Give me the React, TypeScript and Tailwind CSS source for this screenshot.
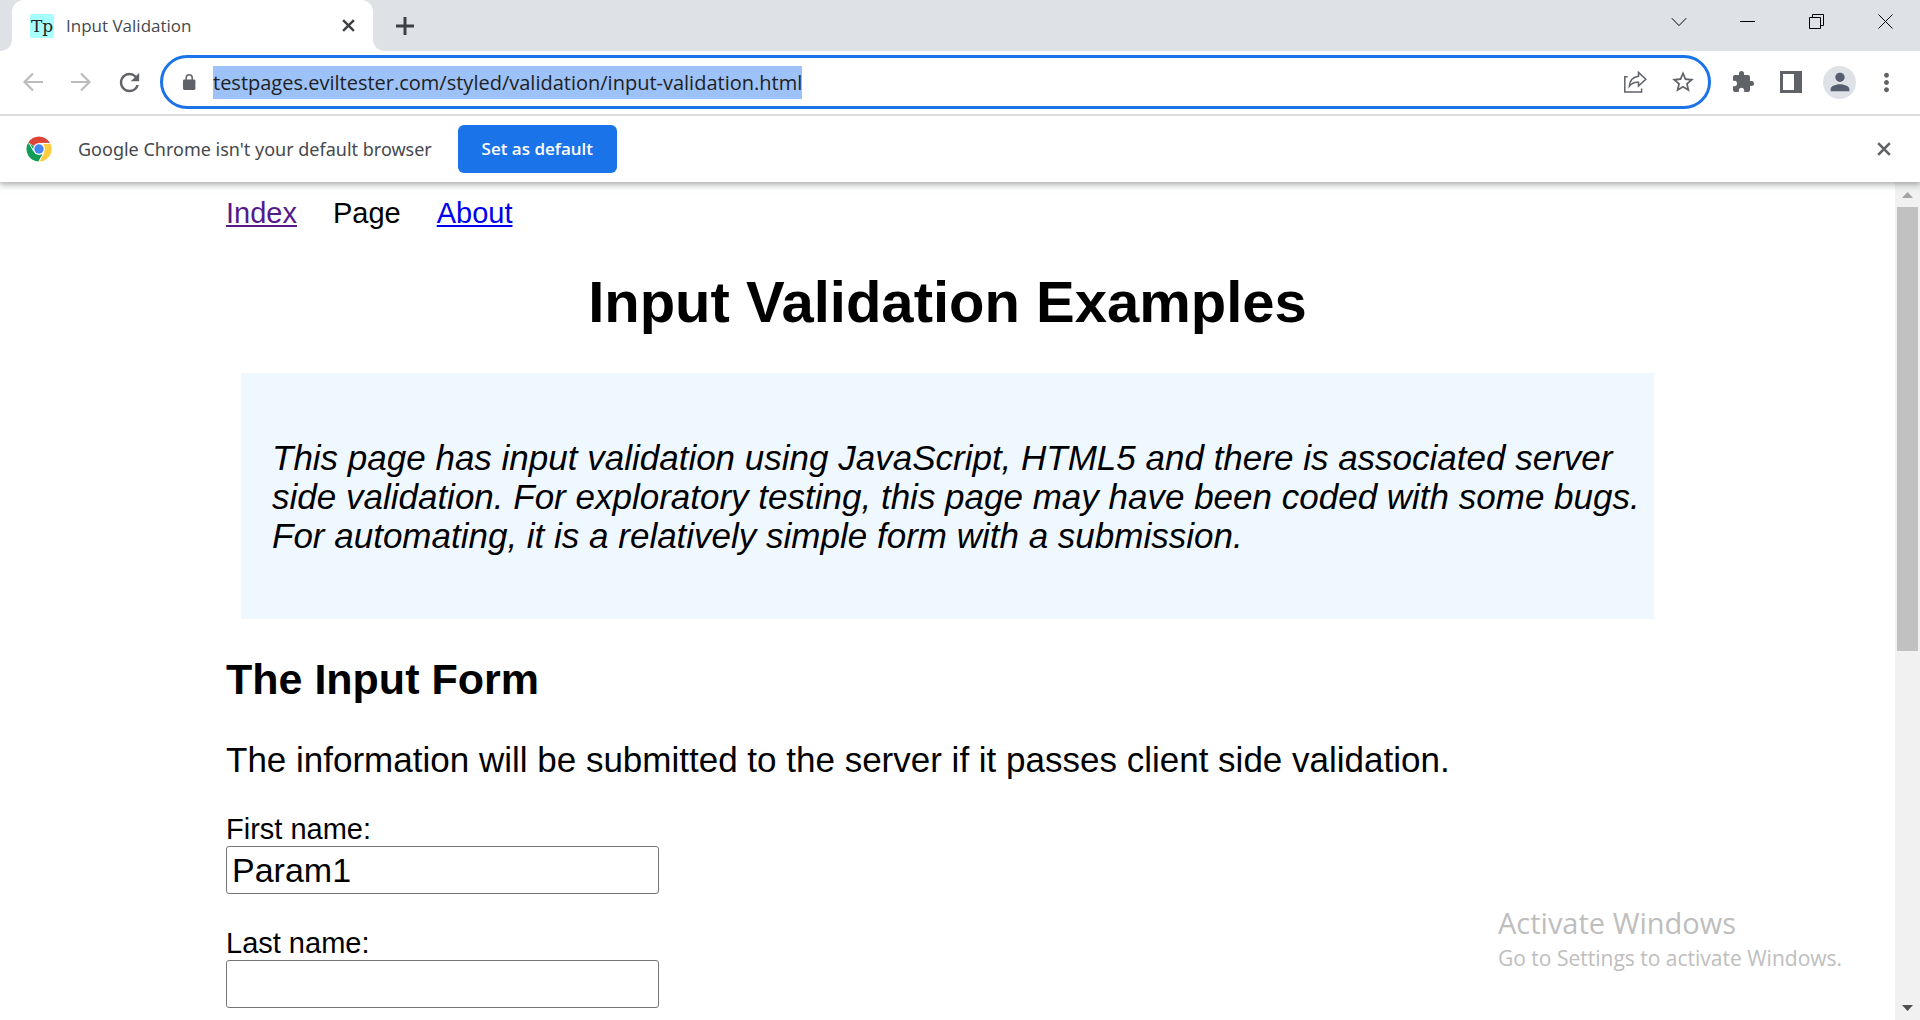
import React from "react";
import { MdExtension, MdMoreVert, MdPerson, MdRefresh, MdStarOutline } from "react-icons/md";

const UI_FONT = "font-['Open_Sans','Noto_Sans',sans-serif]";
const PAGE_FONT = "font-['Liberation_Sans',Arial,sans-serif]";

function Cross({ className }: { className: string }) {
  return (
    <svg viewBox="0 0 14 14" className={className} fill="none" stroke="currentColor" strokeWidth="2.6" aria-hidden="true">
      <path d="M1.2 1.2 12.8 12.8M12.8 1.2 1.2 12.8" />
    </svg>
  );
}

function ChromeLogo() {
  return (
    <svg viewBox="0 0 26 26" className="size-[26px] shrink-0" aria-hidden="true">
      <path d="M13 13 2.2 6.6A12.6 12.6 0 0 1 23.9 6.7L24 7.3H13Z" fill="#db4437" />
      <path d="M13 13 2 6.9A12.6 12.6 0 0 0 12.6 25.6L18.2 15.8Z" fill="#0f9d58" />
      <path d="M13 13 18.4 7.6H24.4A12.6 12.6 0 0 1 13.1 25.6L18.2 16Z" fill="#ffcd40" />
      <path d="M3.4 7.6 7.8 15.4M24.6 7.4H13M12.9 25.4 18 16.4" stroke="#fff" strokeWidth="1" fill="none" />
      <circle cx="13" cy="13" r="5.9" fill="#fff" />
      <circle cx="13" cy="13" r="4.7" fill="#4285f4" />
    </svg>
  );
}

function TabStrip() {
  return (
    <header className="flex h-[51px] shrink-0 justify-between bg-[#dee1e6]">
      <div className="flex">
        <div className="flex items-end">
          <svg viewBox="0 0 12 12" className="size-3" aria-hidden="true">
            <path d="M12 0V12H0C7 12 12 7 12 0Z" fill="#fff" />
          </svg>
          <div className="flex h-full w-[361px] items-center rounded-t-xl bg-white pr-[18px] pl-[18px]">
            <span className="flex size-6 items-center justify-center rounded-xs bg-[#a6fffe] font-['DejaVu_Serif',serif] text-[17px] leading-5 text-[#222]">
              Tp
            </span>
            <span className="ml-3 flex-1 text-[17px] leading-6 text-[#45484d]">Input Validation</span>
            <button type="button" aria-label="Close tab" className="text-[#3c4043]">
              <Cross className="size-[13px]" />
            </button>
          </div>
          <svg viewBox="0 0 12 12" className="size-3" aria-hidden="true">
            <path d="M0 0V12H12C5 12 0 7 0 0Z" fill="#fff" />
          </svg>
        </div>
        <button type="button" aria-label="New tab" className="ml-[11px] text-[#3c4043]">
          <svg viewBox="0 0 18 18" className="size-[18px]" fill="none" stroke="currentColor" strokeWidth="3" aria-hidden="true">
            <path d="M9 0V18M0 9H18" />
          </svg>
        </button>
      </div>
      <div className="flex h-[43px] text-black">
        <button type="button" aria-label="Search tabs" className="flex w-[68px] items-center justify-center">
          <svg viewBox="0 0 16 16" className="size-4" fill="none" stroke="currentColor" aria-hidden="true">
            <path d="M.8 4.2 8 11.6 15.2 4.2" />
          </svg>
        </button>
        <button type="button" aria-label="Minimize" className="flex w-[69px] items-center justify-center">
          <svg viewBox="0 0 15 15" className="size-[15px]" fill="currentColor" aria-hidden="true">
            <path d="M0 7H15V8H0Z" />
          </svg>
        </button>
        <button type="button" aria-label="Restore" className="flex w-[69px] items-center justify-center">
          <svg viewBox="0 0 15 15" className="size-[15px]" fill="none" stroke="currentColor" aria-hidden="true">
            <path d="M.5 3.5H11.5V14.5H.5ZM3.5 3.5V.5H14.5V11.5H11.5" />
          </svg>
        </button>
        <button type="button" aria-label="Close window" className="flex w-[69px] items-center justify-center">
          <svg viewBox="0 0 15 15" className="size-[15px]" fill="none" stroke="currentColor" aria-hidden="true">
            <path d="M.5 .5 14.5 14.5M14.5 .5 .5 14.5" />
          </svg>
        </button>
      </div>
    </header>
  );
}

function Toolbar() {
  return (
    <div className="relative z-20 flex h-[65px] shrink-0 items-center border-b-2 border-[#dadbdc] bg-white pb-px text-[#5f6368]">
      <div className="flex w-40 shrink-0 items-center gap-5 pl-[19px]">
        <button type="button" aria-label="Back" className="text-[#babcbe]">
          <svg viewBox="0 0 28 28" className="size-7" fill="none" stroke="currentColor" strokeWidth="2.2" aria-hidden="true">
            <path d="M24 14H5.5M14 5.5 5.5 14 14 22.5" />
          </svg>
        </button>
        <button type="button" aria-label="Forward" className="text-[#babcbe]">
          <svg viewBox="0 0 28 28" className="size-7" fill="none" stroke="currentColor" strokeWidth="2.2" aria-hidden="true">
            <path d="M4 14H22.5M14 5.5 22.5 14 14 22.5" />
          </svg>
        </button>
        <button type="button" aria-label="Reload">
          <MdRefresh className="size-[29px]" />
        </button>
      </div>
      <div className="flex h-[54px] min-w-0 flex-1 items-center rounded-full border-3 border-[#1a73e8] pr-3 pl-[17px]">
        <svg viewBox="0 0 18 18" className="size-[18px] shrink-0" aria-hidden="true">
          <rect x="3" y="6.5" width="12.4" height="10.5" rx="1.4" fill="currentColor" />
          <path d="M6.2 7V4.8a3 3 0 0 1 6 0V7" fill="none" stroke="currentColor" strokeWidth="1.5" />
        </svg>
        <input
          type="text"
          aria-label="Address"
          defaultValue="testpages.eviltester.com/styled/validation/input-validation.html"
          className="ml-[15px] h-[33px] min-w-0 bg-[#9dc2f7] text-[20px] leading-[33px] text-[#202124] outline-none [field-sizing:content]"
        />
        <button type="button" aria-label="Share" className="ml-auto">
          <svg viewBox="0 0 24 24" className="size-6" fill="none" stroke="currentColor" strokeWidth="1.5" aria-hidden="true">
            <path d="M4.6 6.8H1.8V22H18.6V18.4" />
            <path d="M15.5 2.4 22.8 9.2 15.5 16V12.3C11.5 12 8.6 13.2 6.3 16.2 6.8 10.6 9.8 6.9 15.5 6.2Z" strokeLinejoin="miter" />
          </svg>
        </button>
        <button type="button" aria-label="Bookmark this page" className="ml-[23px]">
          <MdStarOutline className="size-[26px]" />
        </button>
      </div>
      <div className="flex shrink-0 items-center pr-[19px] pl-5">
        <button type="button" aria-label="Extensions">
          <MdExtension className="size-6" />
        </button>
        <button type="button" aria-label="Side panel" className="ml-[25px]">
          <svg viewBox="0 0 22 22" className="size-[22px]" fill="currentColor" aria-hidden="true">
            <path fillRule="evenodd" d="M0 0H22V22H0ZM3 3V19H14V3Z" />
          </svg>
        </button>
        <button type="button" aria-label="Profile" className="ml-[21px] flex size-[33px] items-center justify-center rounded-full bg-[#dee1e6] text-[#545e70]">
          <MdPerson className="size-7" />
        </button>
        <button type="button" aria-label="Menu" className="ml-4">
          <MdMoreVert className="size-[29px]" />
        </button>
      </div>
    </div>
  );
}

function DefaultBrowserBar() {
  return (
    <div className="relative z-10 flex h-[66px] shrink-0 items-center bg-white pr-[29px] pl-[26px] shadow-[0_1px_7px_1px_rgba(60,64,67,0.5)]">
      <ChromeLogo />
      <p className="ml-[26px] font-['Noto_Sans',sans-serif] text-[18px] leading-6 text-[#45484d]">
        Google Chrome isn't your default browser
      </p>
      <button type="button" className="ml-[26px] h-12 w-[159px] rounded-md bg-[#1a73e8] text-[17px] font-semibold text-white">
        Set as default
      </button>
      <button type="button" aria-label="Dismiss" className="ml-auto text-[#5f6368]">
        <Cross className="size-[14px]" />
      </button>
    </div>
  );
}

function Field({ id, label, value }: { id: string; label: string; value: string }) {
  return (
    <div className="mb-8">
      <label htmlFor={id} className="block text-[29px] leading-[34px]">
        {label}
      </label>
      <input
        id={id}
        type="text"
        defaultValue={value}
        className="block h-12 w-[30%] rounded-[3px] border border-[#767676] bg-white px-[5px] text-[34px] leading-[39px]"
      />
    </div>
  );
}

function ValidationPage() {
  return (
    <main className={`min-w-0 flex-1 overflow-hidden bg-white pt-[15px] text-black ${PAGE_FONT}`}>
      <div className="mx-auto w-full max-w-[1443px]">
        <nav className="flex gap-9 text-[29px] leading-[33px]">
          <a href="#index" className="text-[#551a8b] underline">
            Index
          </a>
          <span>Page</span>
          <a href="#about" className="text-[#0000ee] underline">
            About
          </a>
        </nav>
        <h1 className="mt-[39px] text-center text-[58px] leading-[66px] font-bold">Input Validation Examples</h1>
        <blockquote className="mx-[15px] mt-[38px] bg-[#f0f8ff] pt-[65px] pr-3 pb-16 pl-[31px] text-[35px] leading-[39px] italic">
          This page has input validation using JavaScript, HTML5 and there is associated server side validation. For
          exploratory testing, this page may have been coded with some bugs. For automating, it is a relatively simple
          form with a submission.
        </blockquote>
        <h2 className="mt-9 text-[43px] leading-[49px] font-bold">The Input Form</h2>
        <p className="mt-9 text-[35px] leading-[39px]">
          The information will be submitted to the server if it passes client side validation.
        </p>
        <form className="mt-[33px]">
          <Field id="firstname" label="First name:" value="Param1" />
          <Field id="surname" label="Last name:" value="" />
        </form>
      </div>
    </main>
  );
}

function Scrollbar() {
  return (
    <div className="flex w-[25px] shrink-0 flex-col items-center bg-[#f1f1f1]" aria-hidden="true">
      <svg viewBox="0 0 25 25" className="size-[25px] shrink-0">
        <path d="M7 16H18L12.5 10Z" fill="#a3a3a3" />
      </svg>
      <div className="h-[53%] w-[21px] bg-[#c1c1c1]" />
      <svg viewBox="0 0 25 25" className="mt-auto size-[25px] shrink-0">
        <path d="M7 10H18L12.5 16Z" fill="#505050" />
      </svg>
    </div>
  );
}

export default function App() {
  return (
    <div className={`relative flex h-screen flex-col overflow-hidden bg-white ${UI_FONT}`}>
      <TabStrip />
      <Toolbar />
      <DefaultBrowserBar />
      <div className="flex min-h-0 flex-1">
        <ValidationPage />
        <Scrollbar />
      </div>
      <aside className="pointer-events-none absolute right-[79px] bottom-12 w-[343px] whitespace-nowrap text-[#bebebe]">
        <p className="text-[29px] leading-[42px]">Activate Windows</p>
        <p className="text-[21px] leading-7">Go to Settings to activate Windows.</p>
      </aside>
    </div>
  );
}
